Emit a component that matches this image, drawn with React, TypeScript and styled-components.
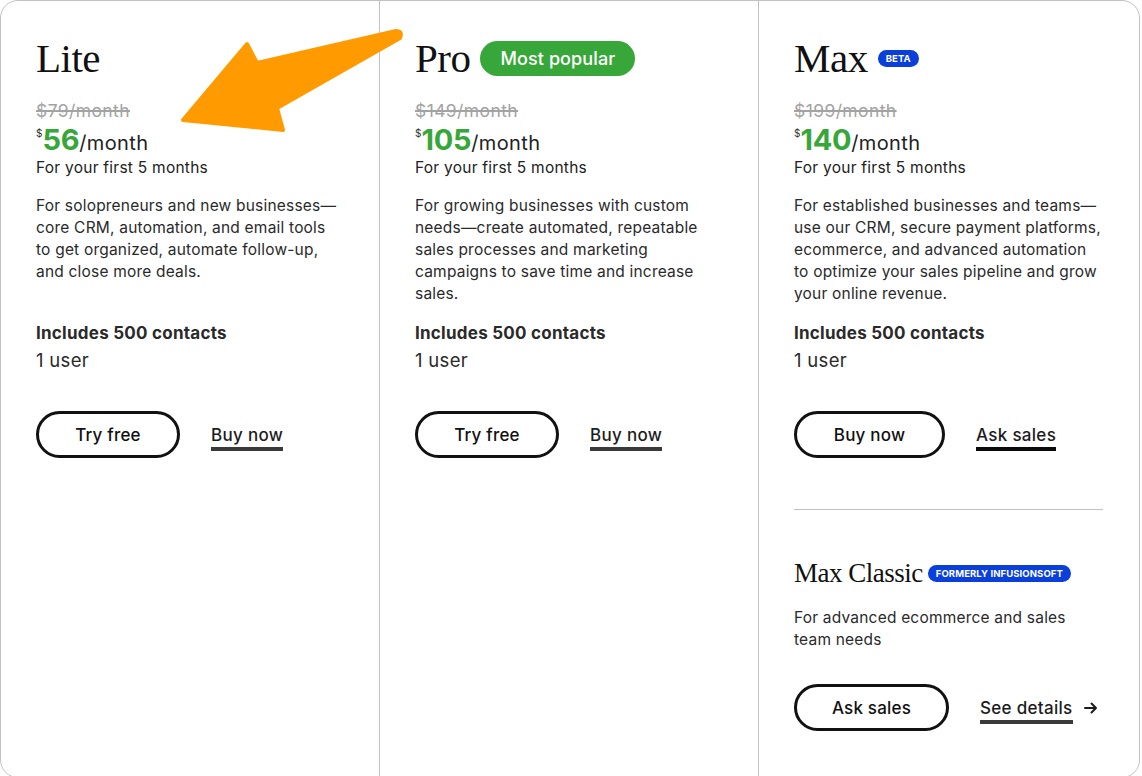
import React from "react";
import styled, { createGlobalStyle } from "styled-components";

const Global = createGlobalStyle`
  html, body { margin: 0; padding: 0; background: #ffffff; overflow: hidden; }
  body { font-family: Inter, "Noto Sans", sans-serif; color: #1c1c1c; -webkit-font-smoothing: antialiased; }
  * { box-sizing: border-box; }
`;

const Page = styled.div`
  position: relative;
  width: 1142px;
  height: 776px;
  overflow: hidden;
`;

const Frame = styled.div`
  width: 1140px;
  height: 778px;
  border: 1px solid #c2c2c2;
  border-radius: 18px;
  display: grid;
  grid-template-columns: 379px 379px 1fr;
  overflow: hidden;
`;

const Column = styled.section<{ $last?: boolean }>`
  padding: 33px 36px 0 35px;
  border-right: ${(p) => (p.$last ? "none" : "1px solid #c2c2c2")};
  display: flex;
  flex-direction: column;
`;

const TitleRow = styled.div<{ $gap: number }>`
  display: flex;
  align-items: center;
  gap: ${(p) => p.$gap}px;
`;

const Title = styled.h2<{ $size: number }>`
  margin: 0;
  font-family: "Liberation Serif", "Times New Roman", serif;
  font-weight: 400;
  font-size: ${(p) => p.$size}px;
  line-height: ${(p) => Math.round(p.$size * 1.18)}px;
  letter-spacing: -0.5px;
  color: #111;
`;

const Badge = styled.span<{ $tone: "green" | "blue"; $big?: boolean }>`
  display: inline-flex;
  align-items: center;
  justify-content: center;
  color: #fff;
  background: ${(p) => (p.$tone === "green" ? "#38a73a" : "#0a3fda")};
  border-radius: 20px;
  height: ${(p) => (p.$big ? 35 : 17)}px;
  padding: ${(p) => (p.$big ? "0 20px" : "0 8px")};
  font-size: ${(p) => (p.$big ? 18 : 9.5)}px;
  font-weight: ${(p) => (p.$big ? 500 : 700)};
  letter-spacing: ${(p) => (p.$big ? "0.1px" : "0.1px")};
  white-space: nowrap;
`;

const OldPrice = styled.div`
  margin-top: 18px;
  font-size: 17.5px;
  line-height: 22px;
  letter-spacing: 0.4px;
  color: #a3a3a3;
  text-decoration: line-through;
  text-decoration-thickness: 1.5px;
`;

const PriceRow = styled.div`
  display: flex;
  align-items: baseline;
  height: 34px;
  margin-top: 1px;
`;

const Currency = styled.span`
  font-size: 10px;
  align-self: flex-start;
  line-height: 10px;
  margin-top: 5px;
  color: #333;
`;

const Amount = styled.span`
  font-size: 29px;
  line-height: 34px;
  font-weight: 700;
  color: #38a73a;
  letter-spacing: -0.3px;
`;

const Per = styled.span`
  font-size: 20px;
  line-height: 34px;
  letter-spacing: 0.4px;
  color: #222;
`;

const Note = styled.div`
  font-size: 15.5px;
  line-height: 22px;
  letter-spacing: 0.25px;
  color: #222;
`;

const Description = styled.p<{ $lines: number; $top: number }>`
  margin: ${(p) => p.$top}px 0 0;
  font-size: 15.5px;
  line-height: 22px;
  letter-spacing: 0.2px;
  color: #2a2a2a;
  min-height: ${(p) => p.$lines * 22}px;
`;

const Includes = styled.div`
  margin-top: 16px;
  font-size: 17px;
  line-height: 24px;
  font-weight: 700;
  letter-spacing: 0.25px;
  color: #2a2a2a;
`;

const Users = styled.div`
  margin-top: 2px;
  font-size: 18.5px;
  line-height: 26px;
  letter-spacing: 0.3px;
  color: #2a2a2a;
`;

const Actions = styled.div<{ $top: number }>`
  margin-top: ${(p) => p.$top}px;
  display: flex;
  align-items: center;
  gap: 31px;
`;

const PillButton = styled.button<{ $width: number }>`
  width: ${(p) => p.$width}px;
  height: 47px;
  border: 3px solid #111;
  border-radius: 24px;
  background: #fff;
  font-family: Inter, "Noto Sans", sans-serif;
  font-size: 17px;
  font-weight: 500;
  letter-spacing: 0.2px;
  color: #111;
  padding: 0;
  cursor: pointer;
`;

const TextLink = styled.a<{ $dark?: boolean }>`
  display: inline-flex;
  align-items: center;
  font-size: 17px;
  font-weight: 500;
  letter-spacing: 0.3px;
  color: #1c1c1c;
  text-decoration: none;
  padding-bottom: 1px;
  border-bottom: 4px solid ${(p) => (p.$dark ? "#0a0a0a" : "#3a3a3a")};
  line-height: 22px;
  margin-top: 5px;
`;

const LinkGroup = styled.div`
  display: flex;
  align-items: center;
  gap: 11px;
`;

const Divider = styled.hr`
  margin: 51px 0 0;
  border: none;
  border-top: 1px solid #c2c2c2;
  width: 100%;
`;

const ClassicBlock = styled.div`
  margin-top: 47px;
`;

const ArrowLayer = styled.svg`
  position: absolute;
  left: 0;
  top: 0;
  pointer-events: none;
`;

type Plan = {
  name: string;
  old: string;
  amount: string;
  desc: string;
  badge?: React.ReactNode;
  primary: { label: string; width: number };
  link: string;
};

const plans: Plan[] = [
  {
    name: "Lite",
    old: "$79/month",
    amount: "56",
    desc: "For solopreneurs and new businesses— core CRM, automation, and email tools to get organized, automate follow-up, and close more deals.",
    primary: { label: "Try free", width: 144 },
    link: "Buy now",
  },
  {
    name: "Pro",
    old: "$149/month",
    amount: "105",
    desc: "For growing businesses with custom needs—create automated, repeatable sales processes and marketing campaigns to save time and increase sales.",
    badge: (
      <Badge $tone="green" $big>
        Most popular
      </Badge>
    ),
    primary: { label: "Try free", width: 144 },
    link: "Buy now",
  },
  {
    name: "Max",
    old: "$199/month",
    amount: "140",
    desc: "For established businesses and teams— use our CRM, secure payment platforms, ecommerce, and advanced automation to optimize your sales pipeline and grow your online revenue.",
    badge: <Badge $tone="blue">BETA</Badge>,
    primary: { label: "Buy now", width: 151 },
    link: "Ask sales",
  },
];

const ArrowRight = () => (
  <svg width="14" height="12" viewBox="0 0 14 12" fill="none">
    <path d="M1 6h11M7.5 1.5 12 6l-4.5 4.5" stroke="#1c1c1c" strokeWidth="2" strokeLinecap="round" strokeLinejoin="round" />
  </svg>
);

export default function App() {
  return (
    <Page>
      <Global />
      <Frame>
        {plans.map((p, i) => {
          const last = i === plans.length - 1;
          return (
            <Column key={p.name} $last={last}>
              <TitleRow $gap={10}>
                <Title $size={41}>{p.name}</Title>
                {p.badge}
              </TitleRow>
              <OldPrice>{p.old}</OldPrice>
              <PriceRow>
                <Currency>$</Currency>
                <Amount>{p.amount}</Amount>
                <Per>/month</Per>
              </PriceRow>
              <Note>For your first 5 months</Note>
              <Description $lines={5} $top={16}>
                {p.desc}
              </Description>
              <Includes>Includes 500 contacts</Includes>
              <Users>1 user</Users>
              <Actions $top={38}>
                <PillButton $width={p.primary.width}>{p.primary.label}</PillButton>
                <TextLink href="#" $dark={last}>
                  {p.link}
                </TextLink>
              </Actions>
              {last && (
                <>
                  <Divider />
                  <ClassicBlock>
                    <TitleRow $gap={5}>
                      <Title $size={27}>Max Classic</Title>
                      <Badge $tone="blue">FORMERLY INFUSIONSOFT</Badge>
                    </TitleRow>
                    <Description $lines={2} $top={18}>
                      For advanced ecommerce and sales team needs
                    </Description>
                    <Actions $top={33}>
                      <PillButton $width={155}>Ask sales</PillButton>
                      <LinkGroup>
                        <TextLink href="#">See details</TextLink>
                        <ArrowRight />
                      </LinkGroup>
                    </Actions>
                  </ClassicBlock>
                </>
              )}
            </Column>
          );
        })}
      </Frame>
      <ArrowLayer width="1142" height="776" viewBox="0 0 1142 776">
        <path
          d="M183 120 L247 44 L257 63 L396 31 Q403 31 400 38 L277 108 L283 130 Z"
          fill="#ff9b00"
          stroke="#ff9b00"
          strokeWidth="4"
          strokeLinejoin="round"
        />
      </ArrowLayer>
    </Page>
  );
}
